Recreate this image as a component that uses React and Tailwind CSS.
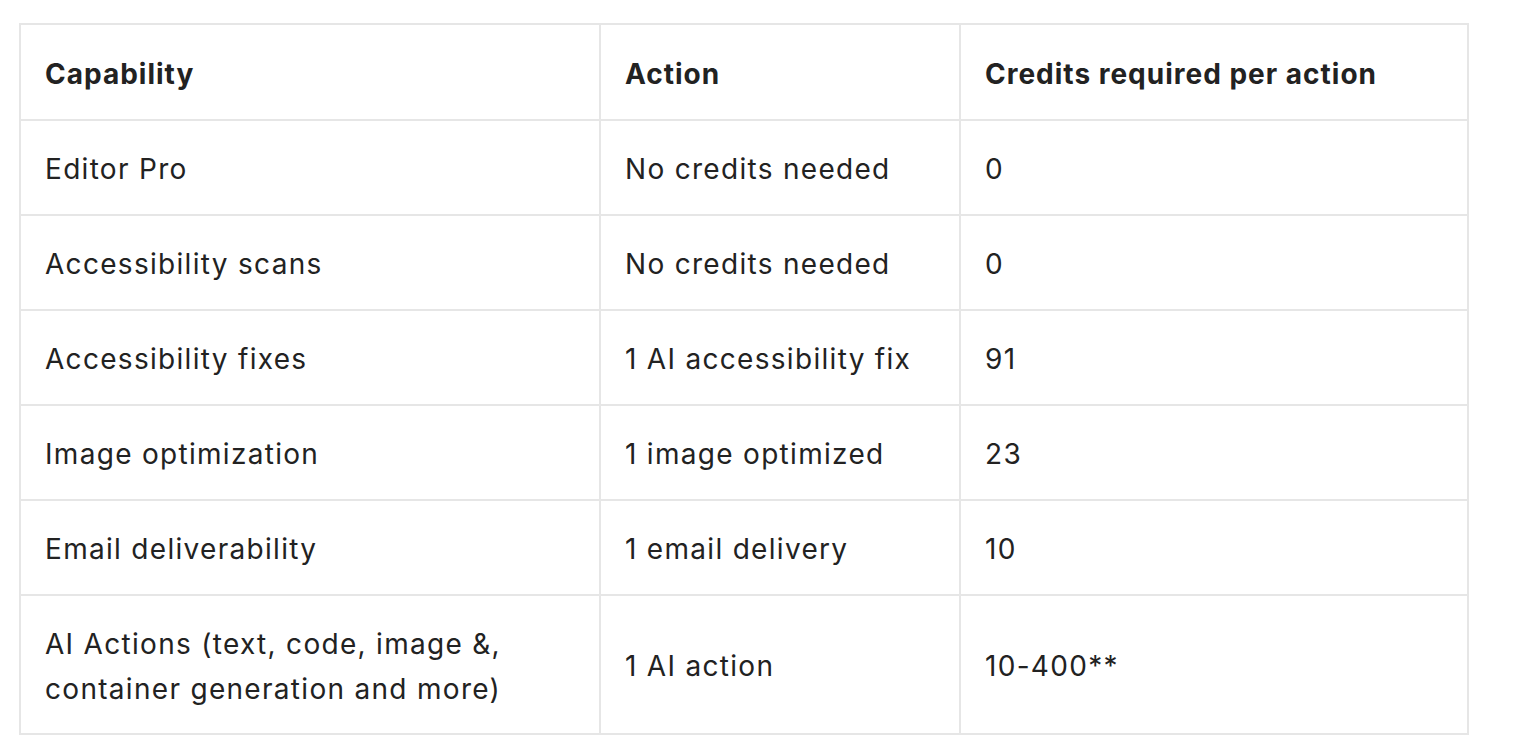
import React from 'react'

const rows = [
  ['Editor Pro', 'No credits needed', '0'],
  ['Accessibility scans', 'No credits needed', '0'],
  ['Accessibility fixes', '1 AI accessibility fix', '91'],
  ['Image optimization', '1 image optimized', '23'],
  ['Email deliverability', '1 email delivery', '10'],
  ['AI Actions (text, code, image &, container generation and more)', '1 AI action', '10-400**'],
]

export default function App() {
  return (
    <div className="bg-white min-h-screen pt-[23px] pl-[19px]" style={{ fontFamily: 'Inter, "Noto Sans", sans-serif' }}>
      <table className="border-collapse text-[#222222] text-[28px] leading-[45px] tracking-[1.3px]">
        <colgroup>
          <col className="w-[580px]" />
          <col className="w-[360px]" />
          <col className="w-[508px]" />
        </colgroup>
        <thead>
          <tr className="h-[96px]">
            <th className="border-2 border-[#e6e6e6] text-left font-bold pl-6 pr-6 pt-1 tracking-[1px]">Capability</th>
            <th className="border-2 border-[#e6e6e6] text-left font-bold pl-6 pr-6 pt-1 tracking-[1px]">Action</th>
            <th className="border-2 border-[#e6e6e6] text-left font-bold pl-6 pr-6 pt-1 tracking-[1px]">Credits required per action</th>
          </tr>
        </thead>
        <tbody>
          {rows.map((r, i) => (
            <tr key={i} className={i === rows.length - 1 ? 'h-[139px]' : 'h-[95px]'}>
              {r.map((c, j) => (
                <td key={j} className="border-2 border-[#e6e6e6] pl-6 pr-6 pt-1 align-middle">
                  {j === 0 && i === rows.length - 1 ? (
                    <>AI Actions (text, code, image &amp;,<br />container generation and more)</>
                  ) : c}
                </td>
              ))}
            </tr>
          ))}
        </tbody>
      </table>
    </div>
  )
}
